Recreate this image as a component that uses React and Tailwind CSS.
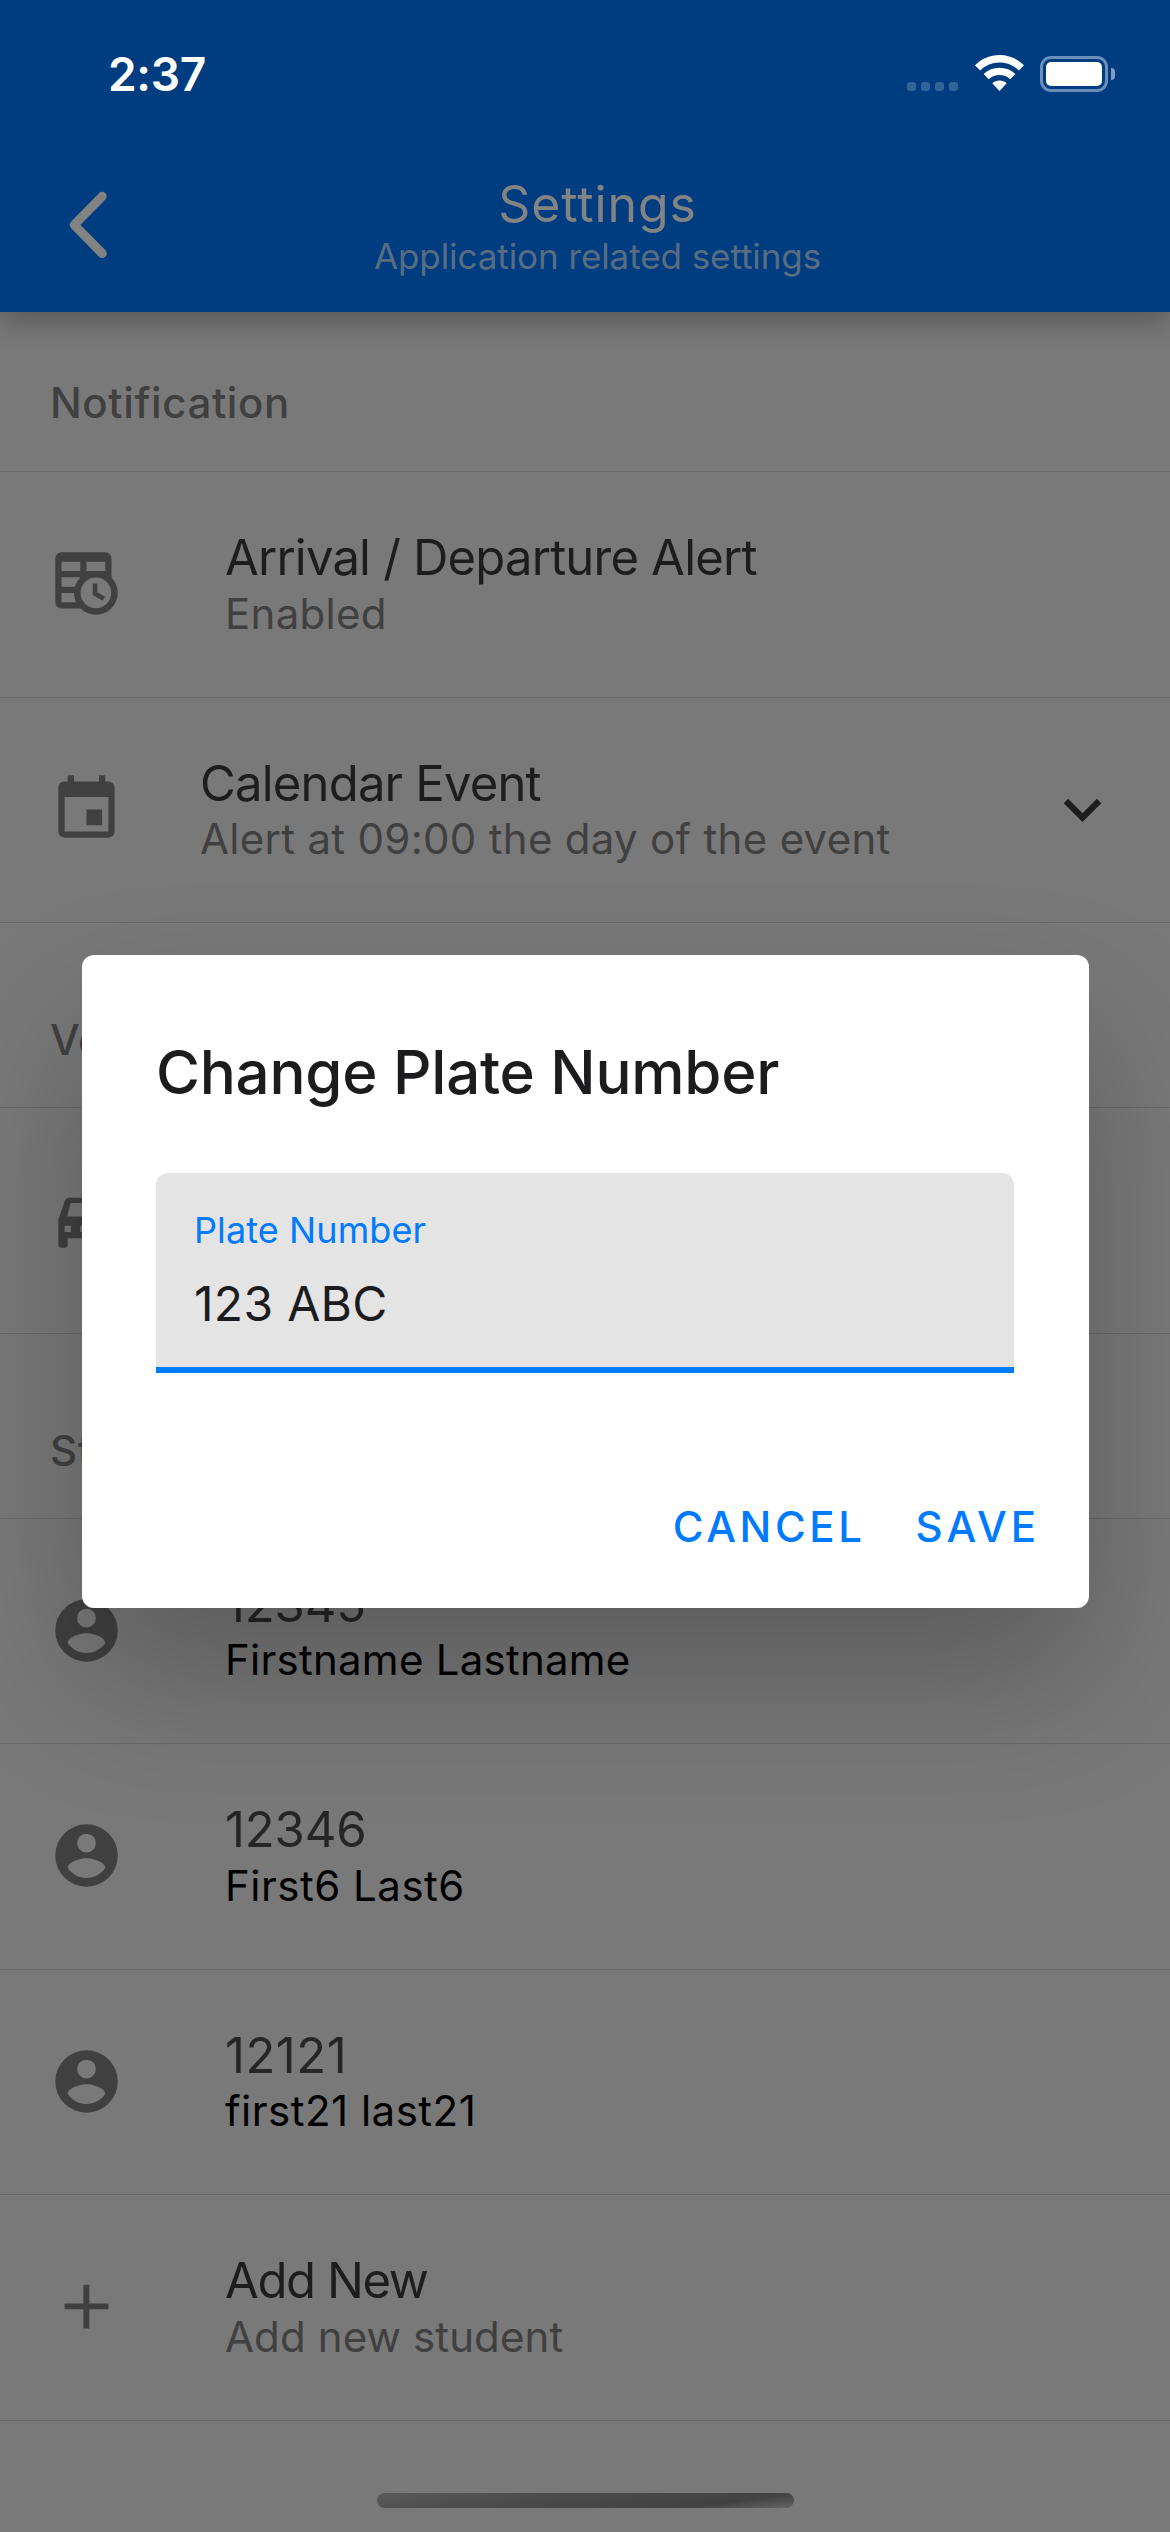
import React from "react";

function TableClockIcon() {
  return (
    <svg viewBox="0 0 24 24" className="size-[75px] shrink-0" fill="#404040">
      <mask id="table-cells">
        <rect width="24" height="24" fill="white" />
        <path d="M4 5h6v3H4zM12 5h6v3h-6zM4 10h6v3H4zM4 15h6v3H4z" fill="black" />
      </mask>
      <rect x="2" y="2" width="18" height="18" rx="2" mask="url(#table-cells)" />
      <circle cx="15" cy="15" r="7" />
      <circle cx="15" cy="15" r="4.9" fill="#797979" />
      <path d="M14 12h1.5v2.82l2.44 1.41-.75 1.3L14 15.69V12Z" />
    </svg>
  );
}

const PATHS = {
  calendar:
    "M19 19H5V8h14m-3-7v2H8V1H6v2H5c-1.11 0-2 .89-2 2v14a2 2 0 0 0 2 2h14a2 2 0 0 0 2-2V5a2 2 0 0 0-2-2h-1V1m-1 11h-5v5h5v-5Z",
  account:
    "M12 19.2c-2.5 0-4.71-1.28-6-3.2.03-2 4-3.1 6-3.1s5.97 1.1 6 3.1c-1.29 1.92-3.5 3.2-6 3.2M12 5a3 3 0 1 1 0 6 3 3 0 0 1 0-6m0-3a10 10 0 1 0 0 20 10 10 0 0 0 0-20Z",
  car: "M18.9 6c-.2-.6-.76-1-1.4-1h-11c-.66 0-1.2.42-1.42 1L3 12v8a1 1 0 0 0 1 1h1a1 1 0 0 0 1-1v-2h12v2a1 1 0 0 0 1 1h1a1 1 0 0 0 1-1v-8l-2.1-6ZM7 16H5v-2h2v2Zm7 0h-4v-2h4v2Zm5 0h-2v-2h2v2ZM5.8 11l1.1-4.3h10.2l1.1 4.3H5.8Z",
  plus: "M19 12.9h-6.1V19h-1.9v-6.1H5v-1.9h6V5h1.9v6H19v1.9Z",
  chevron: "M7.41 8.58 12 13.17l4.59-4.59L18 10l-6 6-6-6 1.41-1.42Z",
};

function Icon({ name, color = "#404040" }) {
  return (
    <svg viewBox="0 0 24 24" className="size-[75px] shrink-0">
      <path d={PATHS[name]} fill={color} fillRule="evenodd" />
    </svg>
  );
}

function StatusBar() {
  return (
    <div className="flex h-[150px] items-start justify-between pl-[108px] pr-[55px]">
      <span className="pt-[46px] text-[46px] leading-[56px] font-semibold tracking-[-0.3px] text-white">
        2:37
      </span>
      <div className="flex h-[92px] items-end">
        <div className="mb-px flex gap-[5px]">
          <span className="size-[9px] rounded-[3px] bg-[#336499]" />
          <span className="size-[9px] rounded-[3px] bg-[#336499]" />
          <span className="size-[9px] rounded-[3px] bg-[#336499]" />
          <span className="size-[9px] rounded-[3px] bg-[#336499]" />
        </div>
        <svg viewBox="0 0 49 36" className="mb-px ml-[17px] h-[36px] w-[49px]" fill="white">
          <path d="M0 10.2C6.6 3.7 15.2 0 24.5 0S42.400 3.700 49 10.200L43.900 15.400C38.600 10.300 31.900 7.400 24.500 7.400S10.400 10.300 5.100 15.400Z" />
          <path d="M8.600 19C13 14.900 18.500 12.700 24.500 12.700S36 14.900 40.400 19L35.200 24.200C32.200 21.500 28.600 20.100 24.500 20.100S16.800 21.500 13.800 24.200Z" />
          <path d="M17.300 28.200C19.300 26.400 21.800 25.400 24.500 25.400S29.700 26.400 31.700 28.200L24.500 36Z" />
        </svg>
        <div className="ml-4 flex h-[36px] w-[68px] rounded-[11px] border-[3px] border-[#6b8fb8] p-[3px]">
          <div className="flex-1 rounded-[5px] bg-white" />
        </div>
        <div className="mb-3 ml-[3px] h-[12px] w-[4px] rounded-r-full bg-[#7f9fc4]" />
      </div>
    </div>
  );
}

function Header() {
  return (
    <header className="relative z-10 h-[312px] bg-[#003d80] shadow-[0_12px_24px_rgba(0,0,0,0.24)]">
      <StatusBar />
      <div className="flex">
        <div className="w-[130px] pt-[37px] pl-[65px]">
          <svg viewBox="0 0 46 76" className="h-[76px] w-[46px]" fill="none">
            <path
              d="M37.200 9.300 9.200 37.800 37.200 66.500"
              stroke="#838383"
              strokeWidth="9"
              strokeLinecap="round"
              strokeLinejoin="round"
            />
          </svg>
        </div>
        <div className="flex-1 pt-6 text-center">
          <h1 className="text-[50px] leading-[60px] tracking-[0.9px] text-[#838383]">Settings</h1>
          <p className="text-[35px] leading-[44px] tracking-[-0.08px] text-[#5a6c80]">
            Application related settings
          </p>
        </div>
        <div className="w-[105px]" />
      </div>
    </header>
  );
}

function Section({ title, className }) {
  return (
    <div className={`border-b border-[#686868] pl-[50px] ${className}`}>
      <h2 className="text-[42px] leading-[60px] font-medium tracking-[0.6px] text-[#404040]">{title}</h2>
    </div>
  );
}

function Row({
  icon,
  title,
  subtitle,
  gap = "ml-[101px]",
  titleClass = "tracking-[-0.8px] text-[#1d1d1d]",
  subClass = "tracking-[0.3px] text-[#404040]",
  trailing,
}) {
  return (
    <div className="flex h-[225.5px] items-start border-b border-[#686868] pr-[50px] pl-[49px]">
      <div className="pt-[74px]">{icon}</div>
      <div className={`flex-1 pt-[60px] ${gap}`}>
        <div className={`text-[49px] leading-[52px] ${titleClass}`}>{title}</div>
        <div className={`mt-[2.5px] text-[42px] leading-[54px] ${subClass}`}>{subtitle}</div>
      </div>
      {trailing && <div className="pt-[74px]">{trailing}</div>}
    </div>
  );
}

function Student({ id, name, titleClass, subClass }) {
  return (
    <Row
      icon={<Icon name="account" />}
      title={id}
      subtitle={name}
      titleClass={titleClass}
      subClass={subClass}
    />
  );
}

function Dialog() {
  return (
    <div className="absolute inset-0 z-20 flex items-start justify-center pt-[955px]">
      <div className="h-[653px] w-[1007px] rounded-[12px] bg-white px-[74.5px] pt-[81px] shadow-[0_72px_144px_rgba(0,0,0,0.24)]">
        <h2 className="text-[60px] leading-[72px] font-medium tracking-[-0.24px] text-[#1c1c1e]">
          Change Plate Number
        </h2>
        <div className="mt-[65px] h-[200px] rounded-t-[12px] border-b-[6px] border-[#007aff] bg-[#e4e4e4] px-[38px] pt-[35px]">
          <div className="text-[36px] leading-[44px] tracking-[0.1px] text-[#007aff]">Plate Number</div>
          <div className="mt-[22px] text-[48px] leading-[60px] tracking-[0.3px] text-[#1c1c1e]">123 ABC</div>
        </div>
        <div className="-mr-[26px] mt-[129px] flex justify-end gap-[50px] text-[42px] leading-[50px] font-medium text-[#007aff]">
          <button className="tracking-[3.6px]">CANCEL</button>
          <button className="tracking-[3.900px]">SAVE</button>
        </div>
      </div>
    </div>
  );
}

export default function App() {
  return (
    <div className="relative flex h-[2532px] w-[1170px] flex-col overflow-hidden bg-[#797979] font-['Inter',sans-serif]">
      <Header />
      <main className="flex-1">
        <Section title="Notification" className="h-[160px] pt-[61px]" />
        <Row
          icon={<TableClockIcon />}
          title="Arrival / Departure Alert"
          subtitle="Enabled"
        />
        <Row
          icon={<Icon name="calendar" />}
          title="Calendar Event"
          subtitle="Alert at 09:00 the day of the event"
          gap="ml-[76px]"
          trailing={<Icon name="chevron" color="#1d1d1d" />}
        />
        <Section title="Vehicle" className="h-[185px] pt-[87px]" />
        <Row icon={<Icon name="car" />} />
        <Section title="Students" className="h-[185px] pt-[87px]" />
        <Student
          id="12345"
          name="Firstname Lastname"
          titleClass="tracking-[-0.15px] text-[#262626]"
          subClass="tracking-[0.25px] text-black"
        />
        <Student
          id="12346"
          name="First6 Last6"
          titleClass="tracking-[-0.15px] text-[#262626]"
          subClass="tracking-[0.5px] text-black"
        />
        <Student
          id="12121"
          name="first21 last21"
          titleClass="tracking-[0.5px] text-[#262626]"
          subClass="tracking-[0.5px] text-black"
        />
        <Row
          icon={<Icon name="plus" />}
          title="Add New"
          subtitle="Add new student"
          titleClass="tracking-[-1.4px] text-[#1d1d1d]"
          subClass="tracking-[0.13px] text-[#404040]"
        />
      </main>
      <footer className="flex justify-center pb-6">
        <div className="h-[15px] w-[417px] rounded-full bg-[linear-gradient(172deg,#5a5a5a_0%,#4a4a4a_40%,#424242_80%,#666666_100%)]" />
      </footer>
      <Dialog />
    </div>
  );
}
